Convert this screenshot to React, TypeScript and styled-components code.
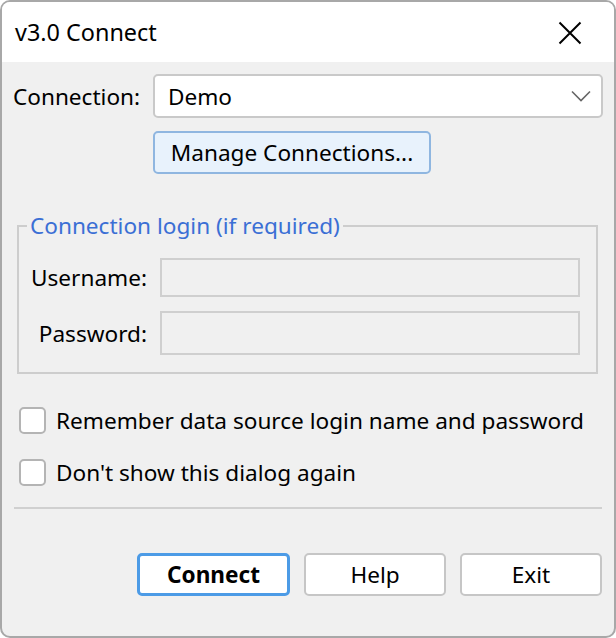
import React from "react";
import styled, { createGlobalStyle } from "styled-components";

const Global = createGlobalStyle`
  html, body { margin: 0; padding: 0; background: #ffffff; }
  * { box-sizing: border-box; }
  body { font-family: "Noto Sans", "Open Sans", sans-serif; }
`;

const FONT = `"Noto Sans", "Open Sans", sans-serif`;
const SIZE = "22.6px";

const Window = styled.div`
  width: 616px;
  height: 638px;
  border: 2px solid #a8a8a8;
  border-radius: 10px;
  overflow: hidden;
  display: flex;
  flex-direction: column;
  background: #f0f0f0;
  font-family: ${FONT};
  font-size: ${SIZE};
  color: #000;
`;

const TitleBar = styled.div`
  height: 60px;
  background: #ffffff;
  display: flex;
  align-items: center;
  justify-content: space-between;
  padding: 0 32px 0 13px;
  flex-shrink: 0;
`;

const Title = styled.div`
  font-size: 23.4px;
`;

const CloseBtn = styled.button`
  border: none;
  background: transparent;
  padding: 0;
  width: 24px;
  height: 24px;
  display: flex;
  align-items: center;
  justify-content: center;
  margin-top: 2px;
`;

const Body = styled.div`
  flex: 1;
  display: flex;
  flex-direction: column;
  padding: 12px 11px 0 11px;
`;

const ConnRow = styled.div`
  display: flex;
  align-items: center;
  height: 44px;
`;

const ConnLabel = styled.div`
  width: 140px;
  white-space: nowrap;
`;

const Combo = styled.div`
  flex: 1;
  height: 44px;
  background: #ffffff;
  border: 2px solid #c9c9c9;
  border-radius: 5px;
  display: flex;
  align-items: center;
  justify-content: space-between;
  padding: 0 10px 0 13px;
`;

const ManageRow = styled.div`
  display: flex;
  padding-left: 140px;
  margin-top: 13px;
`;

const ManageButton = styled.button`
  height: 43px;
  width: 278px;
  background: #e8f2fc;
  border: 2px solid #8fb6e0;
  border-radius: 5px;
  font-family: ${FONT};
  font-size: ${SIZE};
  color: #000;
  padding: 0;
`;

const Group = styled.fieldset`
  margin: 39px 5px 0 4px;
  border: 2px solid #cdcdcd;
  padding: 19px 16px 17px 16px;
  display: flex;
  flex-direction: column;
  gap: 14px;
  min-width: 0;
`;

const Legend = styled.legend`
  color: #3b6fd5;
  padding: 0 3px 0 3px;
  margin-left: -8px;
  font-size: ${SIZE};
  line-height: 26px;
`;

const FieldRow = styled.div`
  display: flex;
  align-items: center;
`;

const FieldLabel = styled.div`
  flex: 0 0 125px;
  min-width: 0;
  display: flex;
  justify-content: flex-end;
  padding-right: 13px;
  white-space: nowrap;
`;

const Field = styled.div<{ $h: number }>`
  flex: 1;
  height: ${(p) => p.$h}px;
  border: 2px solid #cfcfcf;
  background: #f0f0f0;
`;

const Checks = styled.div`
  display: flex;
  flex-direction: column;
  gap: 25px;
  margin-top: 33px;
  padding-left: 6px;
`;

const CheckRow = styled.label`
  display: flex;
  align-items: center;
  gap: 10px;
  height: 27px;
`;

const Box = styled.span`
  width: 27px;
  height: 27px;
  border: 2px solid #b4b4b4;
  border-radius: 5px;
  background: #ffffff;
  flex-shrink: 0;
`;

const Separator = styled.div`
  height: 2px;
  background: #d0d0d0;
  margin: 21px 1px 0 1px;
`;

const Buttons = styled.div`
  display: flex;
  justify-content: flex-end;
  gap: 14px;
  margin-top: 44px;
  padding-right: 1px;
`;

const Btn = styled.button<{ $primary?: boolean; $w: number }>`
  width: ${(p) => p.$w}px;
  height: 43px;
  background: #ffffff;
  border: ${(p) => (p.$primary ? "3px solid #4c9be6" : "2px solid #c6c6c6")};
  border-radius: 5px;
  font-family: ${FONT};
  font-size: ${SIZE};
  font-weight: ${(p) => (p.$primary ? 700 : 400)};
  color: #000;
  padding: 0;
`;

export default function App() {
  return (
    <>
      <Global />
      <Window>
        <TitleBar>
          <Title>v3.0 Connect</Title>
          <CloseBtn aria-label="Close">
            <svg width="24" height="24" viewBox="0 0 24 24">
              <path d="M1.5 1.5 L22.5 22.5 M22.5 1.5 L1.5 22.5" stroke="#000" strokeWidth="2" fill="none" />
            </svg>
          </CloseBtn>
        </TitleBar>
        <Body>
          <ConnRow>
            <ConnLabel>Connection:</ConnLabel>
            <Combo>
              <span>Demo</span>
              <svg width="20" height="12" viewBox="0 0 20 12">
                <path d="M1 1.5 L10 10.5 L19 1.5" stroke="#666" strokeWidth="1.6" fill="none" />
              </svg>
            </Combo>
          </ConnRow>
          <ManageRow>
            <ManageButton>Manage Connections...</ManageButton>
          </ManageRow>
          <Group>
            <Legend>Connection login (if required)</Legend>
            <FieldRow>
              <FieldLabel>Username:</FieldLabel>
              <Field $h={39} />
            </FieldRow>
            <FieldRow>
              <FieldLabel>Password:</FieldLabel>
              <Field $h={44} />
            </FieldRow>
          </Group>
          <Checks>
            <CheckRow>
              <Box />
              <span>Remember data source login name and password</span>
            </CheckRow>
            <CheckRow>
              <Box />
              <span>Don't show this dialog again</span>
            </CheckRow>
          </Checks>
          <Separator />
          <Buttons>
            <Btn $primary $w={153}>Connect</Btn>
            <Btn $w={142}>Help</Btn>
            <Btn $w={142}>Exit</Btn>
          </Buttons>
        </Body>
      </Window>
    </>
  );
}
